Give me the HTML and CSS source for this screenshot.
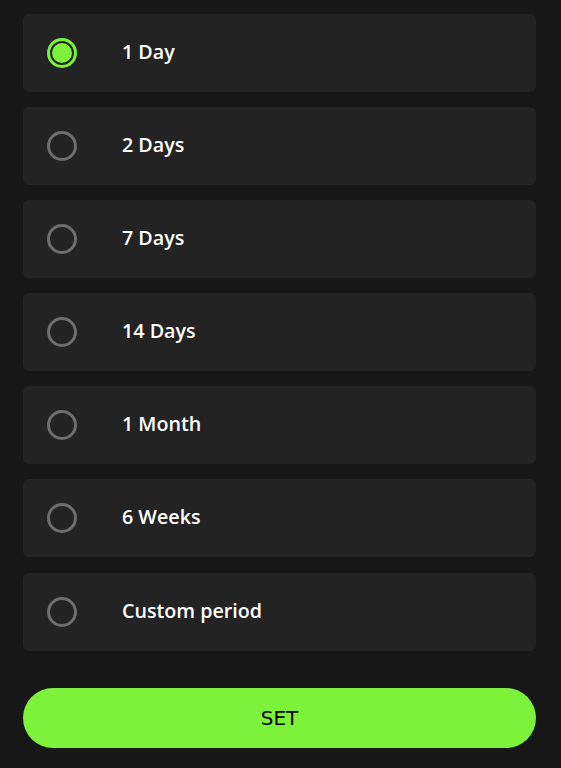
FILE: index.html
```html
<!DOCTYPE html>
<html>
<head>
<meta charset="utf-8">
<link rel="stylesheet" href="styles.css">
</head>
<body>
<div class="page">
  <ul class="options">
    <li class="option selected"><span class="radio"></span><span class="label">1 Day</span></li>
    <li class="option"><span class="radio"></span><span class="label">2 Days</span></li>
    <li class="option"><span class="radio"></span><span class="label">7 Days</span></li>
    <li class="option"><span class="radio"></span><span class="label">14 Days</span></li>
    <li class="option"><span class="radio"></span><span class="label">1 Month</span></li>
    <li class="option"><span class="radio"></span><span class="label">6 Weeks</span></li>
    <li class="option"><span class="radio"></span><span class="label">Custom period</span></li>
  </ul>
  <button class="set-btn">SET</button>
</div>
</body>
</html>
```

FILE: styles.css
```css
html, body {
  margin: 0;
  padding: 0;
  background: #171717;
}
.page {
  padding: 14px 25px 0 23px;
  display: flex;
  flex-direction: column;
}
.options {
  list-style: none;
  margin: 0;
  padding: 0;
  display: flex;
  flex-direction: column;
  gap: 15.1px;
}
.option {
  height: 78px;
  background: #232323;
  border-radius: 6px;
  display: flex;
  align-items: center;
  padding-left: 24px;
  box-sizing: border-box;
}
.radio {
  width: 30px;
  height: 30px;
  box-sizing: border-box;
  border: 3px solid #6e6e6e;
  border-radius: 50%;
  display: flex;
  align-items: center;
  justify-content: center;
  flex: none;
}
.selected .radio {
  border-color: #7cf23a;
}
.selected .radio::after {
  content: "";
  width: 20px;
  height: 20px;
  border-radius: 50%;
  background: #7cf23a;
}
.label {
  margin-left: 45px;
  margin-top: -3px;
  color: #ffffff;
  font-family: "Open Sans", sans-serif;
  font-weight: 600;
  font-size: 19.7px;
}
.set-btn {
  margin-top: 37px;
  height: 60px;
  border: none;
  border-radius: 30px;
  background: #7cf23a;
  color: #000;
  font-family: "DejaVu Sans", sans-serif;
  font-size: 20px;
  cursor: pointer;
}
```
